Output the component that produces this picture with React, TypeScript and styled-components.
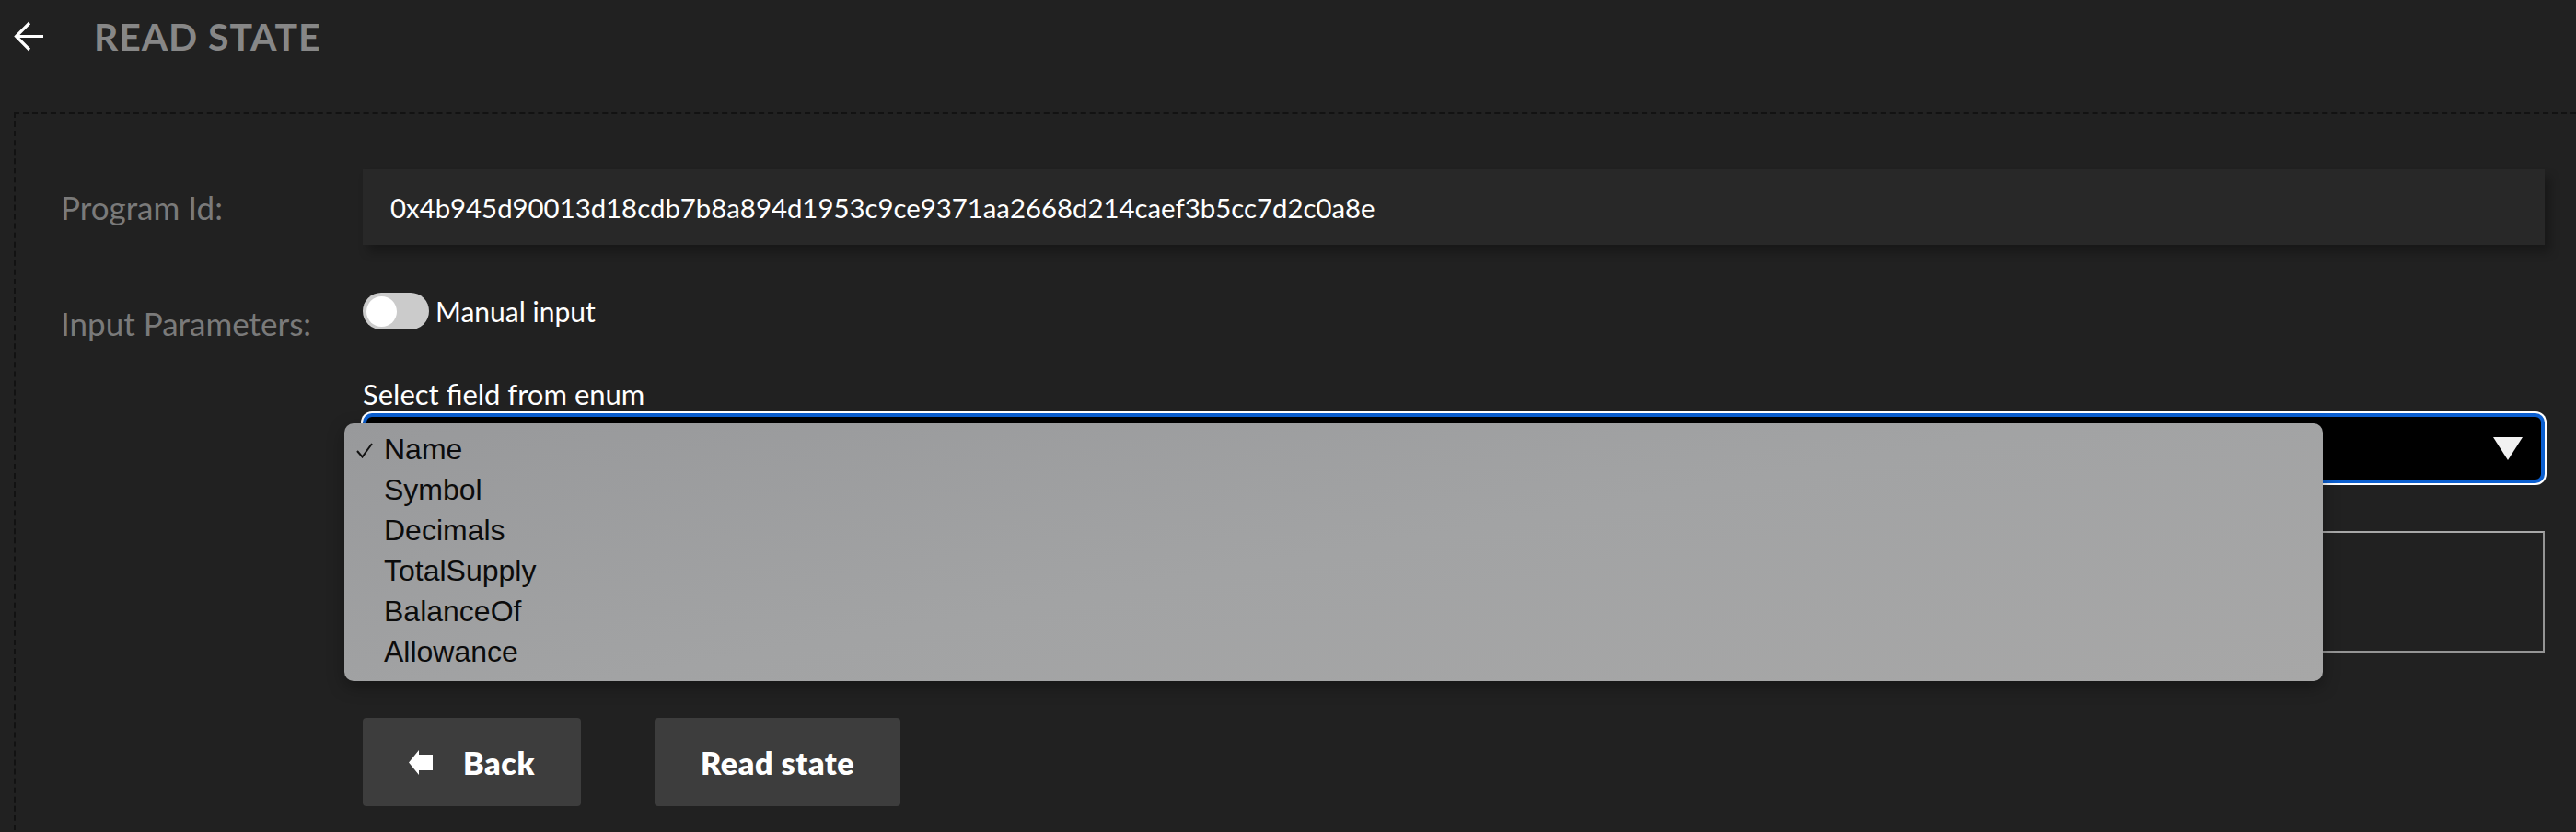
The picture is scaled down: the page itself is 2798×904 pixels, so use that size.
import React from "react";
import styled, { createGlobalStyle } from "styled-components";

const Global = createGlobalStyle`
  html, body { margin: 0; padding: 0; background: #212121; }
  body { font-family: Lato, "Open Sans", sans-serif; color: #fff; overflow: hidden; }
  * { box-sizing: border-box; }
`;

const Page = styled.div`
  width: 2798px;
  height: 904px;
  background: #212121;
  overflow: hidden;
`;

const Header = styled.header`
  height: 78px;
  display: flex;
  align-items: center;
  padding-left: 15px;
  gap: 54px;
`;

const Title = styled.h1`
  margin: 0;
  font-family: Lato, sans-serif;
  font-weight: 700;
  font-size: 41px;
  line-height: 1;
  color: #878787;
  letter-spacing: 0.9px;
`;

const Panel = styled.section`
  margin: 44px 0 0 15px;
  min-height: 800px;
  border-top: 2px dashed #121212;
  border-left: 2px dashed #121212;
  padding: 60px 34px 0 49px;
  display: grid;
  grid-template-columns: 328px 1fr;
  grid-template-rows: auto 1fr;
  row-gap: 52px;
`;

const Label = styled.div<{ $top?: number }>`
  font-size: 35px;
  color: #7a7a7a;
  align-self: ${(p) => (p.$top !== undefined ? "start" : "center")};
  padding-top: ${(p) => p.$top ?? 0}px;
  line-height: 1.2;
`;

const IdBox = styled.div`
  height: 82px;
  background: #282828;
  box-shadow: 6px 8px 10px rgba(0, 0, 0, 0.28);
  display: flex;
  align-items: center;
  padding-left: 30px;
  font-size: 29.35px;
  color: #fff;
`;

const Column = styled.div`
  display: flex;
  flex-direction: column;
  align-self: start;
`;

const ToggleRow = styled.label`
  display: flex;
  align-items: center;
  gap: 7px;
  height: 40px;
  font-size: 30px;
  color: #fff;
`;

const Track = styled.span`
  width: 72px;
  height: 40px;
  border-radius: 20px;
  background: #cbcbcb;
  display: flex;
  align-items: center;
  padding-left: 4px;
`;

const Knob = styled.span`
  width: 33px;
  height: 33px;
  border-radius: 50%;
  background: #fff;
`;

const FieldLabel = styled.div`
  margin-top: 53px;
  font-size: 31px;
  line-height: 34px;
  color: #fff;
`;

const SelectWrap = styled.div`
  position: relative;
  margin-top: 4px;
`;

const SelectBox = styled.div`
  height: 76px;
  background: #000;
  border: 4px solid #0b5fd0;
  border-radius: 10px;
  box-shadow: 0 0 0 2px #fff;
  display: flex;
  align-items: center;
  justify-content: flex-end;
  padding-right: 20px;
`;

const Menu = styled.ul`
  position: absolute;
  left: -20px;
  top: 11px;
  width: 2149px;
  margin: 0;
  padding: 6px 0 10px;
  list-style: none;
  border-radius: 10px;
  background: linear-gradient(170deg, #98999b 0%, #a2a3a4 50%, #a7a7a7 100%);
  box-shadow: 0 6px 18px rgba(0, 0, 0, 0.35);
  z-index: 5;
`;

const MenuItem = styled.li`
  position: relative;
  height: 44px;
  display: flex;
  align-items: center;
  padding-left: 43px;
  font-family: "Liberation Sans", Arial, sans-serif;
  font-size: 32px;
  color: #0c0c0c;
`;

const Check = styled.svg`
  position: absolute;
  left: 12px;
  top: 14px;
`;

const TextArea = styled.div`
  margin-top: 52px;
  height: 132px;
  border: 2px solid #959595;
  border-top-color: #a8a8a8;
  background: #212121;
`;

const Buttons = styled.div`
  margin-top: 71px;
  display: flex;
  gap: 80px;
`;

const Button = styled.button`
  height: 96px;
  padding: 0 50px;
  border: none;
  border-radius: 4px;
  background: #3d3d3d;
  color: #fff;
  font-family: Lato, sans-serif;
  font-weight: 800;
  font-size: 34px;
  letter-spacing: 0.6px;
  display: flex;
  align-items: center;
  gap: 33px;
  cursor: pointer;
`;

const options = ["Name", "Symbol", "Decimals", "TotalSupply", "BalanceOf", "Allowance"];

export default function App() {
  return (
    <Page>
      <Global />
      <Header>
        <svg width="33" height="33" viewBox="0 0 33 33" fill="none">
          <path d="M32 16.5H3 M17 2 L2.5 16.5 L17 31" stroke="#fff" strokeWidth="3.2" />
        </svg>
        <Title>READ STATE</Title>
      </Header>
      <Panel>
        <Label>Program Id:</Label>
        <IdBox>0x4b945d90013d18cdb7b8a894d1953c9ce9371aa2668d214caef3b5cc7d2c0a8e</IdBox>
        <Label $top={12}>Input Parameters:</Label>
        <Column>
          <ToggleRow>
            <Track>
              <Knob />
            </Track>
            Manual input
          </ToggleRow>
          <FieldLabel>Select field from enum</FieldLabel>
          <SelectWrap>
            <SelectBox>
              <svg width="32" height="25" viewBox="0 0 32 25">
                <polygon points="0,0 32,0 16,25" fill="#f2f2f2" />
              </svg>
            </SelectBox>
            <Menu>
              {options.map((o, i) => (
                <MenuItem key={o}>
                  {i === 0 && (
                    <Check width="20" height="18" viewBox="0 0 20 18" fill="none">
                      <path d="M2 10 L7.5 16.5 L18 2" stroke="#111" strokeWidth="2" />
                    </Check>
                  )}
                  {o}
                </MenuItem>
              ))}
            </Menu>
          </SelectWrap>
          <TextArea />
          <Buttons>
            <Button>
              <svg width="26" height="27" viewBox="0 0 26 27">
                <polygon points="0,13.5 11,0 11,5 26,5 26,22 11,22 11,27" fill="#fff" />
              </svg>
              Back
            </Button>
            <Button>Read state</Button>
          </Buttons>
        </Column>
      </Panel>
    </Page>
  );
}
